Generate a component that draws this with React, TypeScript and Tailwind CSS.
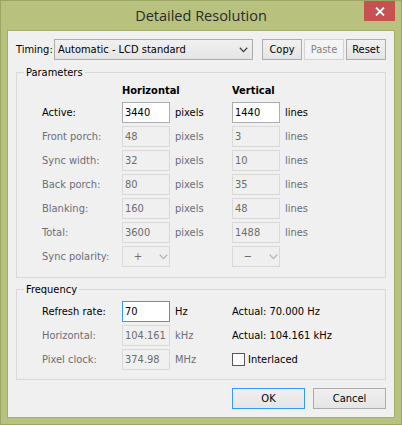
import React from "react";

const body = "font-[family-name:'DejaVu_Sans_Condensed','DejaVu_Sans',sans-serif] text-[11px] leading-[13px]";

function Chevron({ color = "#404040" }: { color?: string }) {
  return (
    <svg width="9" height="6" viewBox="0 0 9 6" className="shrink-0">
      <polyline points="0.8,0.8 4.5,4.6 8.2,0.8" fill="none" stroke={color} strokeWidth="1.3" />
    </svg>
  );
}

function Field({ value, enabled = false, focused = false }: { value: string; enabled?: boolean; focused?: boolean }) {
  const cls = focused
    ? "bg-white border-[#3399ff] text-black"
    : enabled
    ? "bg-white border-[#abadb3] text-black"
    : "bg-[#f0f0f0] border-[#d9d9d9] text-[#6d6d6d]";
  return (
    <input
      readOnly
      value={value}
      className={`w-[48px] h-[21px] border px-[2px] outline-none ${cls}`}
    />
  );
}

function Polarity({ sign }: { sign: string }) {
  return (
    <div className="w-[48px] h-[21px] border border-[#d9d9d9] bg-[#efefef] flex items-center text-[#6d6d6d]">
      <span className="w-[30px] text-center">{sign}</span>
      <span className="ml-[6px]">
        <Chevron color="#b5b5b5" />
      </span>
    </div>
  );
}

function Btn({ label, w, disabled = false, primary = false }: { label: string; w: string; disabled?: boolean; primary?: boolean }) {
  const cls = disabled
    ? "border-[#d3d3d3] bg-[#f4f4f4] text-[#838383]"
    : primary
    ? "border-[#3399ff] bg-gradient-to-b from-[#f0f0f0] to-[#e5e5e5] text-black"
    : "border-[#acacac] bg-gradient-to-b from-[#f0f0f0] to-[#e5e5e5] text-black";
  return (
    <button className={`${w} h-[21px] border flex items-center justify-center ${cls}`}>{label}</button>
  );
}

function Row({
  label,
  enabled = false,
  h,
  hu,
  v,
  vu,
}: {
  label: string;
  enabled?: boolean;
  h: React.ReactNode;
  hu: string;
  v?: React.ReactNode;
  vu?: string;
}) {
  const tc = enabled ? "text-black" : "text-[#6d6d78]";
  return (
    <div className="flex items-center h-[21px]">
      <span className={`w-[80px] ${tc}`}>{label}</span>
      {h}
      <span className={`w-[62px] pl-[5px] ${tc}`}>{hu}</span>
      {v}
      {vu && <span className={`pl-[5px] ${tc}`}>{vu}</span>}
    </div>
  );
}

function Group({ title, children, className = "" }: { title: string; children: React.ReactNode; className?: string }) {
  return (
    <fieldset className={`border border-[#d9d9d9] ${className}`}>
      <legend className="ml-[7px] px-[2px] leading-[13px] text-black">{title}</legend>
      {children}
    </fieldset>
  );
}

export default function App() {
  return (
    <div className={`w-[402px] h-[425px] bg-[#b8c27e] border border-[#9ba566] flex flex-col ${body}`}>
      <div className="h-[29px] relative flex items-center justify-center">
        <span className="font-['Open_Sans',sans-serif] text-[14.5px] text-[#2b2b2b] -mt-[1px]">Detailed Resolution</span>
        <div className="absolute right-[6px] top-0 w-[31px] h-[20px] bg-[#c75050] flex items-center justify-center">
          <svg width="10" height="9" viewBox="0 0 10 9">
            <path d="M1 0.5 L9 8.5 M9 0.5 L1 8.5" stroke="white" strokeWidth="1.8" />
          </svg>
        </div>
      </div>
      <div className="mx-[6px] mb-[6px] flex-1 bg-[#f0f0f0] border border-[#a3ad6c] px-[8px] pt-[8px] flex flex-col">
        <div className="flex items-center h-[21px]">
          <span className="w-[38px] text-black">Timing:</span>
          <div className="w-[199px] h-[21px] border border-[#acacac] bg-gradient-to-b from-[#f0f0f0] to-[#e5e5e5] flex items-center pl-[3px] pr-[4px] text-black">
            <span className="flex-1">Automatic - LCD standard</span>
            <Chevron />
          </div>
          <div className="ml-[9px] flex gap-[2px]">
            <Btn label="Copy" w="w-[40px]" />
            <Btn label="Paste" w="w-[40px]" disabled />
            <Btn label="Reset" w="w-[40px]" />
          </div>
        </div>

        <Group title="Parameters" className="mt-[6px]">
          <div className="pl-[25px] pb-[10px]">
            <div className="flex items-center h-[23px] font-bold text-black">
              <span className="w-[80px]" />
              <span className="w-[110px]">Horizontal</span>
              <span>Vertical</span>
            </div>
            <div className="flex flex-col gap-[3px]">
              <Row label="Active:" enabled h={<Field value="3440" enabled />} hu="pixels" v={<Field value="1440" enabled />} vu="lines" />
              <Row label="Front porch:" h={<Field value="48" />} hu="pixels" v={<Field value="3" />} vu="lines" />
              <Row label="Sync width:" h={<Field value="32" />} hu="pixels" v={<Field value="10" />} vu="lines" />
              <Row label="Back porch:" h={<Field value="80" />} hu="pixels" v={<Field value="35" />} vu="lines" />
              <Row label="Blanking:" h={<Field value="160" />} hu="pixels" v={<Field value="48" />} vu="lines" />
              <Row label="Total:" h={<Field value="3600" />} hu="pixels" v={<Field value="1488" />} vu="lines" />
              <Row label="Sync polarity:" h={<Polarity sign="+" />} hu="" v={<Polarity sign="−" />} />
            </div>
          </div>
        </Group>

        <Group title="Frequency" className="mt-[5px]">
          <div className="pl-[25px] pt-[5px] pb-[9px] flex flex-col gap-[3px]">
            <Row label="Refresh rate:" enabled h={<Field value="70" focused />} hu="Hz" v={<span className="text-black">Actual: 70.000 Hz</span>} />
            <Row label="Horizontal:" h={<Field value="104.161" />} hu="kHz" v={<span className="text-black">Actual: 104.161 kHz</span>} />
            <Row
              label="Pixel clock:"
              h={<Field value="374.98" />}
              hu="MHz"
              v={
                <span className="flex items-center text-black">
                  <span className="w-[13px] h-[13px] border border-[#555] bg-white mr-[3px]" />
                  Interlaced
                </span>
              }
            />
          </div>
        </Group>

        <div className="mt-[8px] flex justify-end gap-[8px]">
          <Btn label="OK" w="w-[73px]" primary />
          <Btn label="Cancel" w="w-[73px]" />
        </div>
      </div>
    </div>
  );
}
